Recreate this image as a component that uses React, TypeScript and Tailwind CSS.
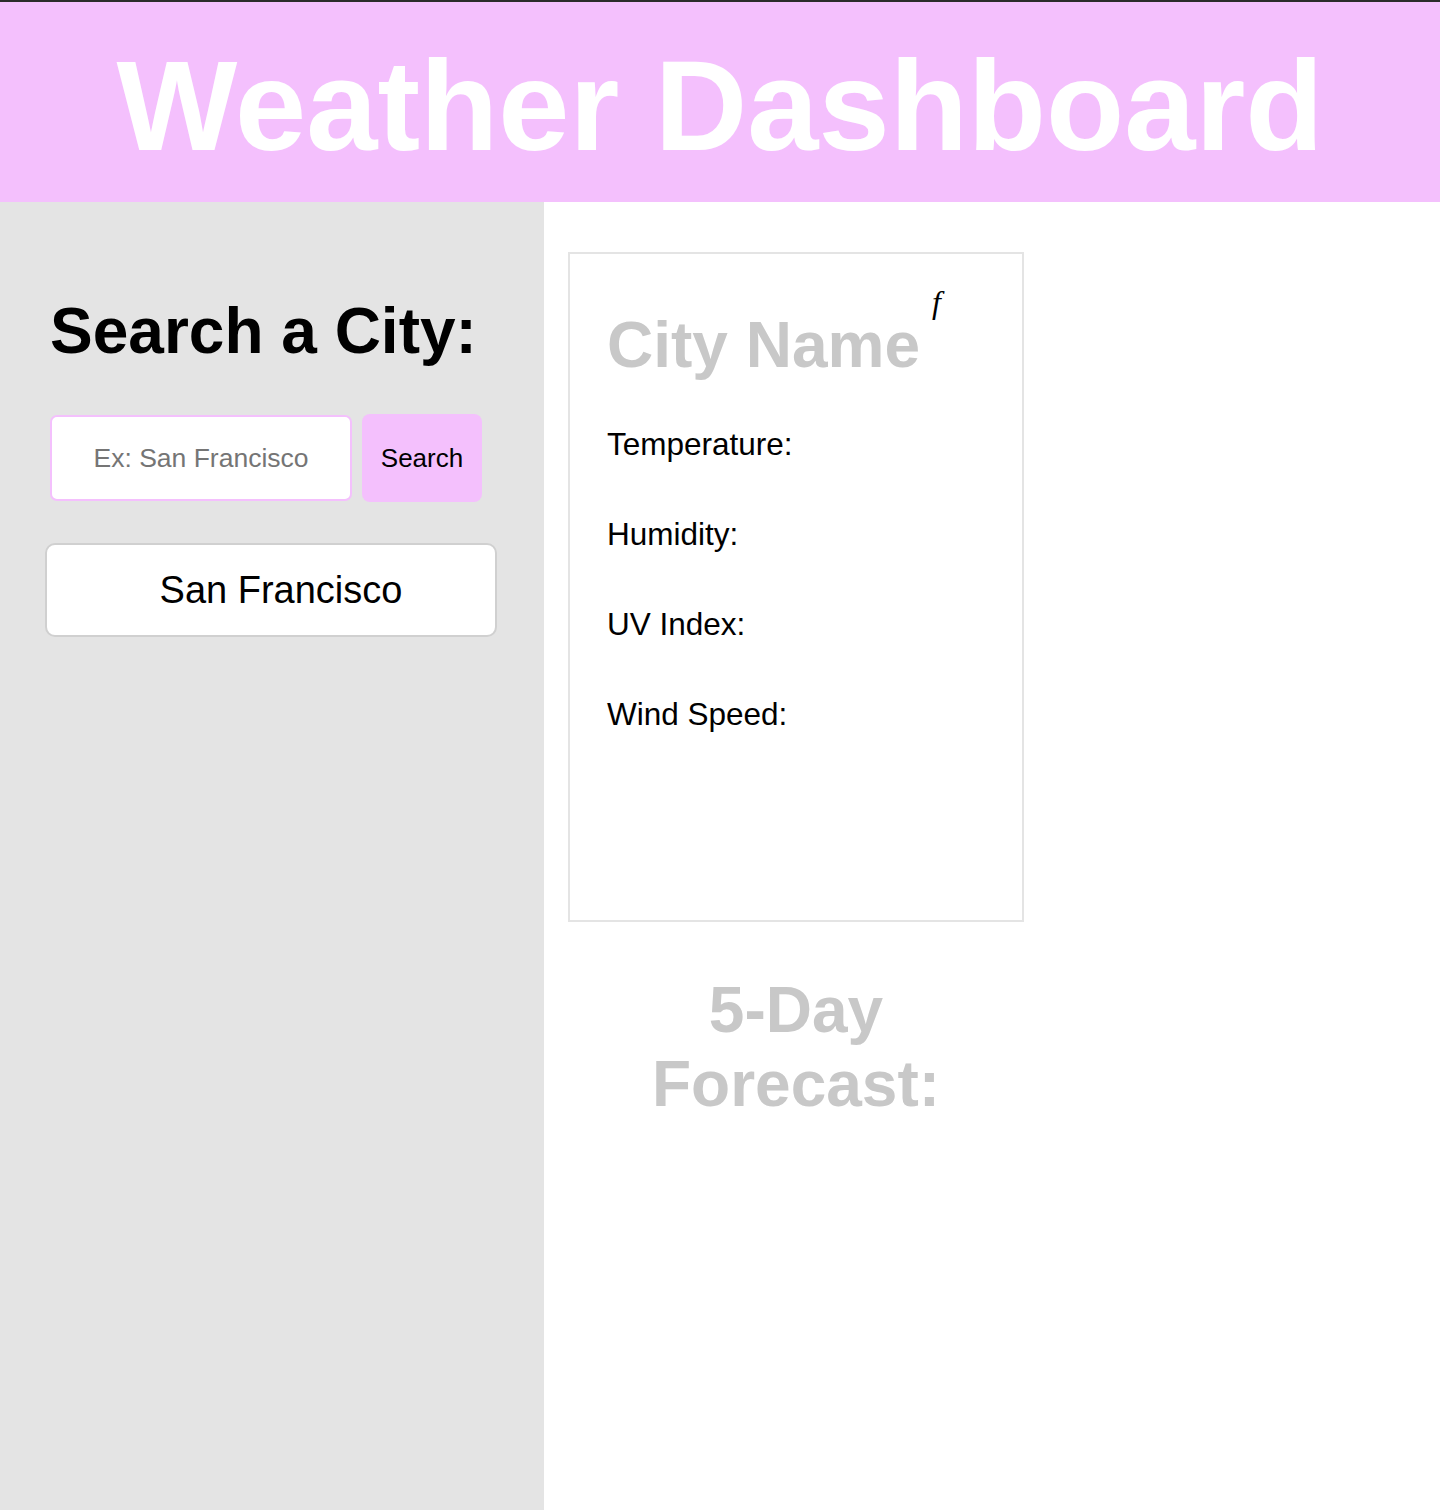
import React from "react";

const font = { fontFamily: '"Liberation Sans", Arial, Helvetica, sans-serif' };

export default function App() {
  return (
    <div className="min-h-[1510px] bg-white" style={font}>
      <header className="h-[202px] border-t-2 border-[#2b2b2b] bg-[#f4c0fd] pt-[30px] text-center">
        <h1 className="text-[128px] font-bold leading-[147px] text-white">Weather Dashboard</h1>
      </header>
      <div className="flex min-h-[1308px]">
        <aside className="w-[544px] shrink-0 bg-[#e4e4e4] pt-[92px]">
          <h2 className="ml-[50px] text-[64px] font-bold leading-[74px] text-black">Search a City:</h2>
          <div className="ml-[50px] mt-[46px] flex items-center gap-[10px]">
            <input
              type="text"
              placeholder="Ex: San Francisco"
              className="h-[86px] w-[302px] rounded-[7px] border-2 border-[#f4c0fd] bg-white text-center text-[26.5px] text-black outline-none placeholder:text-[#757575]"
            />
            <button className="h-[88px] w-[120px] rounded-[8px] bg-[#f4c0fd] text-[26px] text-black">
              Search
            </button>
          </div>
          <button className="ml-[45px] mt-[41px] h-[94px] w-[452px] rounded-[10px] border-2 border-[#d0d0d0] bg-white pl-[20px] text-center text-[38px] text-black">
            San Francisco
          </button>
        </aside>
        <main className="pl-[24px] pt-[50px]">
          <div className="h-[670px] w-[456px] border-2 border-[#e4e4e4] pl-[37px] pt-[54px]">
            <h2 className="text-[64px] font-bold leading-[74px] text-[#c8c8c8]">
              City Name
              <span
                className="relative top-[-54px] ml-[12px] text-[32px] font-normal italic text-black"
                style={{ fontFamily: '"Liberation Serif", "Times New Roman", serif' }}
              >
                f
              </span>
            </h2>
            <div className="mt-[33px] flex flex-col gap-[54px] text-[31.5px] leading-[36px] text-black">
              <p>Temperature:</p>
              <p>Humidity:</p>
              <p>UV Index:</p>
              <p>Wind Speed:</p>
            </div>
          </div>
          <h2 className="mt-[51px] w-[456px] text-center text-[64px] font-bold leading-[74px] text-[#c8c8c8]">
            5-Day Forecast:
          </h2>
        </main>
      </div>
    </div>
  );
}
